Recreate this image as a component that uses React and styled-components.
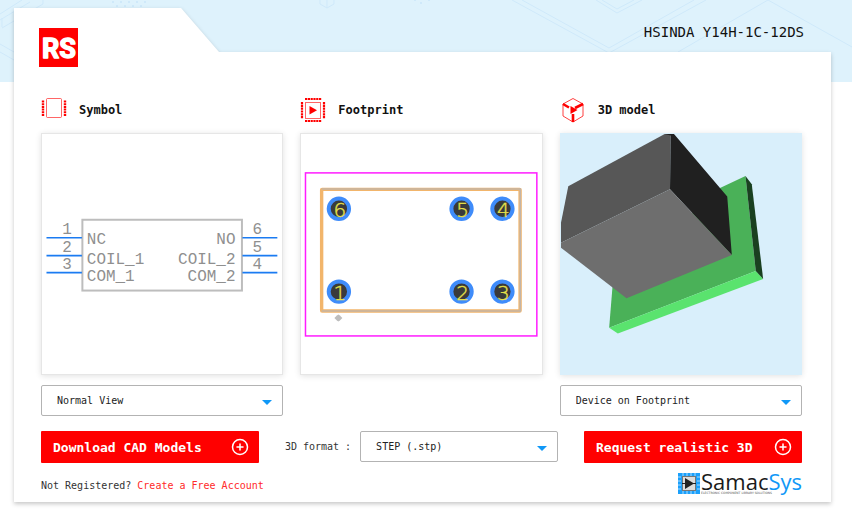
import React from 'react';
import styled, { createGlobalStyle } from 'styled-components';
import { CirclePlus } from 'lucide-react';

const RED = '#ff0000';
const BLUE = '#1098f7';

const GlobalStyle = createGlobalStyle`
  * {
    box-sizing: border-box;
  }

  body {
    margin: 0;
    background: #fff;
    color: #111;
    font-family: 'DejaVu Sans Mono', 'Liberation Mono', monospace;
    font-size: 10px;
  }
`;

const Page = styled.div`
  position: relative;
  padding: 8px 21px 12px 14px;
`;

const Sky = styled.div`
  position: absolute;
  top: 0;
  left: 0;
  right: 0;
  height: 82px;
  background: #def2fc;

  svg {
    display: block;
    width: 100%;
    height: 100%;
  }
`;

const Card = styled.main`
  position: relative;
`;

const Sheet = styled.div`
  position: absolute;
  inset: 0;
  filter: drop-shadow(0 2px 2px rgba(0, 0, 0, 0.22));

  &::before {
    content: '';
    position: absolute;
    inset: 0;
    background: #fff;
    clip-path: polygon(0 0, 167px 0, 205px 44px, 100% 44px, 100% 100%, 0 100%);
  }
`;

const Header = styled.header`
  position: relative;
  display: flex;
  justify-content: space-between;
  align-items: flex-start;
  padding: 16px 27px 0 25px;
`;

const Logo = styled.svg`
  width: 40px;
  height: 40px;
  margin-top: 4px;
`;

const PartName = styled.h1`
  margin: 0;
  font-size: 14px;
  font-weight: 400;
  line-height: 16px;
`;

const Content = styled.div`
  position: relative;
  padding: 28px 29px 6px 27px;
`;

const Columns = styled.div`
  display: grid;
  grid-template-columns: repeat(3, 1fr);
  gap: 17px;
`;

const Heading = styled.h2`
  display: flex;
  align-items: center;
  gap: 12px;
  height: 27px;
  margin: 0 0 10px;
  font-size: 12px;
  font-weight: 700;

  svg {
    width: 26px;
    height: 27px;
  }
`;

const Preview = styled.div`
  aspect-ratio: 1;
  background: ${props => (props.tinted ? '#d9effb' : '#fff')};
  box-shadow: ${props => (props.tinted ? '' : 'inset 0 0 0 1px #e6e6e6, ')}0 1px 6px rgba(0, 0, 0, 0.12);

  svg {
    display: block;
    width: 100%;
    height: 100%;
  }
`;

const SelectBox = styled.div`
  position: relative;
  width: ${props => props.width || '100%'};
  margin-top: ${props => (props.below ? '10px' : '0')};

  &::after {
    content: '';
    position: absolute;
    top: 15px;
    right: 11px;
    border: 5px solid transparent;
    border-top-color: ${BLUE};
    border-bottom: 0;
    pointer-events: none;
  }

  select {
    display: block;
    appearance: none;
    width: 100%;
    height: 31px;
    padding: 0 24px 0 15px;
    border: 1px solid #b3b3b3;
    border-radius: 2px;
    background: #fff;
    color: #222;
    font: inherit;
  }
`;

const Actions = styled.div`
  display: flex;
  justify-content: space-between;
  align-items: flex-start;
  margin-top: 15px;
`;

const Button = styled.button`
  display: flex;
  justify-content: space-between;
  align-items: center;
  width: 218px;
  height: 32px;
  padding: 0 10px 0 12px;
  border: 0;
  border-radius: 1px;
  background: ${RED};
  color: #fff;
  font-family: inherit;
  font-size: 13px;
  font-weight: 700;
`;

const Format = styled.div`
  display: flex;
  align-items: center;
  gap: 9px;

  label {
    color: #333;
    white-space: nowrap;
  }
`;

const Footer = styled.footer`
  display: flex;
  justify-content: space-between;
  align-items: center;
  margin-top: 9px;
  color: #333;

  p {
    margin: 0;
    padding-top: 3px;
  }

  a {
    color: #ff2a2a;
    text-decoration: none;
  }
`;

const Vendor = styled.svg`
  width: 124px;
  height: 24px;
  overflow: visible;
`;

const SkyPattern = () => (
  <svg viewBox="0 0 852 82" preserveAspectRatio="xMidYMin slice" fill="none" stroke="#cfe9fa" aria-hidden="true">
    <path d="M0 20 L30 2 M2 28 L43 4 L43 0 M0 14 L22 0 M2 18 V27 M0 44 L14 52 M0 52 L14 60" />
    <path d="M112 2 H152 M116 6 H148" strokeDasharray="2 6" strokeWidth="2" />
    <path d="M320 0 V4 L327 8 L334 4 V0 M327 0 V8" />
    <path d="M414 0 h2 M420 3 h2 M428 0 h2" strokeWidth="2" />
    <path d="M512 0 L609 53 L706 0 M522 0 L609 48 L694 0 M596 0 L617 13 L642 0 M602 0 L617 9 L634 0" />
    <path d="M678 52 L768 0 L852 47" />
  </svg>
);

const RsLogo = () => (
  <Logo viewBox="0 0 40 40" role="img" aria-label="RS">
    <rect width="39" height="39" fill={RED} />
    <text
      x="20"
      y="30"
      fill="#fff"
      stroke="#fff"
      strokeWidth="1.4"
      strokeLinejoin="round"
      textAnchor="middle"
      fontFamily="Roboto, sans-serif"
      fontSize="27"
      fontWeight="700"
    >
      RS
    </text>
  </Logo>
);

const SymbolIcon = () => (
  <svg viewBox="0 0 26 27" fill="none" stroke={RED} aria-hidden="true">
    <rect x="5.5" y="2.5" width="15" height="19" rx="1" strokeOpacity="0.6" />
    <path d="M2 4.5 V20.5 M24 4.5 V20.5" strokeWidth="2.4" strokeDasharray="2 0.7" />
  </svg>
);

const FootprintIcon = () => (
  <svg viewBox="0 0 26 27" fill="none" stroke={RED} aria-hidden="true">
    <rect x="5.5" y="6.5" width="15" height="16" strokeOpacity="0.6" />
    <path d="M2 6 V22.5 M24 6 V22.5 M5 3 H21.5 M5 25 H21.5" strokeWidth="2.2" strokeDasharray="2.2 0.6" />
    <path d="M9.5 10 L17 14.2 L9.5 18.5 Z" fill={RED} stroke="none" />
  </svg>
);

const ModelIcon = () => (
  <svg viewBox="0 0 26 27" fill="none" stroke={RED} aria-hidden="true">
    <path d="M13 2.5 L23 8 V20 L13 26 L3 20 V8 Z" strokeOpacity="0.75" />
    <path d="M3 8 L9 11.5 M15 12 L23 8 M13 18 V26" strokeWidth="2.6" />
    <path d="M10.5 10 L17.5 14 L10.5 18 Z" fill={RED} stroke="none" />
  </svg>
);

const leftPins = [
  { number: 1, name: 'NC', y: 105, nameY: 111 },
  { number: 2, name: 'COIL_1', y: 123, nameY: 131 },
  { number: 3, name: 'COM_1', y: 140, nameY: 148 }
];

const rightPins = [
  { number: 6, name: 'NO', y: 105, nameY: 111 },
  { number: 5, name: 'COIL_2', y: 123, nameY: 131 },
  { number: 4, name: 'COM_2', y: 140, nameY: 148 }
];

const SymbolDrawing = () => (
  <svg viewBox="0 0 243 243" role="img" aria-label="Schematic symbol">
    <rect x="41.5" y="87" width="160" height="71" fill="none" stroke="#bdbdbd" strokeWidth="2" />
    <g stroke="#1a7bf2" strokeWidth="1.6">
      {leftPins.map(pin => (
        <path key={pin.number} d={`M5.5 ${pin.y} H41`} />
      ))}
      {rightPins.map(pin => (
        <path key={pin.number} d={`M202 ${pin.y} H237`} />
      ))}
    </g>
    <g fill="#8f8f8f" fontFamily="'Liberation Mono', monospace" fontSize="16">
      {leftPins.map(pin => (
        <g key={pin.number}>
          <text x="26" y={pin.y - 4} textAnchor="middle">
            {pin.number}
          </text>
          <text x="46" y={pin.nameY}>
            {pin.name}
          </text>
        </g>
      ))}
      {rightPins.map(pin => (
        <g key={pin.number}>
          <text x="217" y={pin.y - 4} textAnchor="middle">
            {pin.number}
          </text>
          <text x="195" y={pin.nameY} textAnchor="end">
            {pin.name}
          </text>
        </g>
      ))}
    </g>
  </svg>
);

const pads = [
  { number: 6, x: 39, y: 76 },
  { number: 5, x: 162, y: 76 },
  { number: 4, x: 203, y: 76 },
  { number: 1, x: 39, y: 159 },
  { number: 2, x: 162, y: 159 },
  { number: 3, x: 203, y: 159 }
];

const FootprintDrawing = () => (
  <svg viewBox="0 0 243 243" role="img" aria-label="Footprint">
    <rect x="5.5" y="40" width="232" height="163.5" fill="none" stroke="#ff1cff" strokeWidth="1.5" />
    <rect x="21.7" y="56.5" width="199" height="122" rx="0.5" fill="none" stroke="#f2b56b" strokeWidth="3.4" />
    <path d="M21.7 56.2 H220.9 V178.5 H21.7" fill="none" stroke="#c3b5a8" strokeWidth="1.6" />
    {pads.map(pad => (
      <g key={pad.number}>
        <circle cx={pad.x} cy={pad.y} r="10.2" fill="#3a3a3a" stroke="#3f8cfa" strokeWidth="4" />
        <text
          x={pad.x + 1}
          y={pad.y + 8}
          fill="#e6e04a"
          stroke="#e6e04a"
          strokeWidth="0.4"
          textAnchor="middle"
          fontFamily="'DejaVu Sans', sans-serif"
          fontSize="20"
          fontWeight="200"
        >
          {pad.number}
        </text>
      </g>
    ))}
    <path d="M34.5 185.5 L37 183 L38.5 182 L40 183 L42.5 185.5 L40 188 L38.5 189 L37 188 Z" fill="#bdbdbd" />
  </svg>
);

const ModelDrawing = () => (
  <svg viewBox="0 0 243 243" role="img" aria-label="3D model">
    <path d="M53 150 L161 55 L186 43 L196.3 138.3 L49.3 195.3 Z" fill="#4ab158" />
    <path d="M49.3 195.3 L196.3 138.3 L203.7 146.3 L58 201 Z" fill="#5ae36e" />
    <path d="M186 43 L192.3 51.3 L203.7 146.3 L196.3 138.3 Z" fill="#1a4020" />
    <path d="M8.3 53.3 L105 1 H111 L110.3 56.3 L1 110 V90 Z" fill="#575757" />
    <path d="M105 1 H114.3 L167.7 63.7 L172.3 122.3 L110.3 56.3 L111 2.5 Z" fill="#202020" />
    <path d="M110.3 56.3 L172.3 122.3 L66.7 165.7 L1 115 V110 Z" fill="#6e6e6e" />
  </svg>
);

const SamacSys = () => (
  <Vendor viewBox="0 0 124 24" role="img" aria-label="SamacSys">
    <rect x="0" y="1" width="22" height="21" fill="#1ba0fb" />
    <path d="M5 1 V4 M9 1 V4 M13 1 V4 M17 1 V4 M5 19 V22 M9 19 V22 M13 19 V22 M17 19 V22" stroke="#a9dbff" />
    <path d="M0 5 H3 M0 9 H3 M0 13 H3 M0 17 H3 M19 5 H22 M19 9 H22 M19 13 H22 M19 17 H22" stroke="#a9dbff" />
    <rect x="4.5" y="4.5" width="13" height="14" fill="#ddd" stroke="#777" />
    <path d="M7 6 L16 11.5 L7 17 Z" fill="#222" />
    <path d="M4 11.5 H8 M15 11.5 H18" stroke="#222" />
    <text x="23" y="18" fontFamily="'Open Sans', 'Noto Sans', sans-serif" fontSize="22" fill="#1a1a1a">
      Samac<tspan fill={BLUE}>Sys</tspan>
    </text>
    <text x="23" y="22" fontFamily="'DejaVu Sans', sans-serif" fontSize="3" fill="#555">
      ELECTRONIC COMPONENT LIBRARY SOLUTIONS
    </text>
  </Vendor>
);

const Select = ({ options, name, label, ...rest }) => (
  <SelectBox {...rest}>
    <select id={name} aria-label={label}>
      {options.map(option => (
        <option key={option}>{option}</option>
      ))}
    </select>
  </SelectBox>
);

const App = () => (
  <>
    <GlobalStyle />
    <Page>
      <Sky>
        <SkyPattern />
      </Sky>
      <Card>
        <Sheet />
        <Header>
          <RsLogo />
          <PartName>HSINDA Y14H-1C-12DS</PartName>
        </Header>
        <Content>
          <Columns>
            <section>
              <Heading>
                <SymbolIcon />
                Symbol
              </Heading>
              <Preview>
                <SymbolDrawing />
              </Preview>
              <Select below label="Symbol view" options={['Normal View']} />
            </section>
            <section>
              <Heading>
                <FootprintIcon />
                Footprint
              </Heading>
              <Preview>
                <FootprintDrawing />
              </Preview>
            </section>
            <section>
              <Heading>
                <ModelIcon />
                3D model
              </Heading>
              <Preview tinted>
                <ModelDrawing />
              </Preview>
              <Select below label="Model view" options={['Device on Footprint']} />
            </section>
          </Columns>
          <Actions>
            <Button type="button">
              Download CAD Models
              <CirclePlus size={18} />
            </Button>
            <Format>
              <label htmlFor="format">3D format :</label>
              <Select name="format" width="198px" options={['STEP (.stp)']} />
            </Format>
            <Button type="button">
              Request realistic 3D
              <CirclePlus size={18} />
            </Button>
          </Actions>
          <Footer>
            <p>
              Not Registered? <a href="#register">Create a Free Account</a>
            </p>
            <SamacSys />
          </Footer>
        </Content>
      </Card>
    </Page>
  </>
);

export default App;
